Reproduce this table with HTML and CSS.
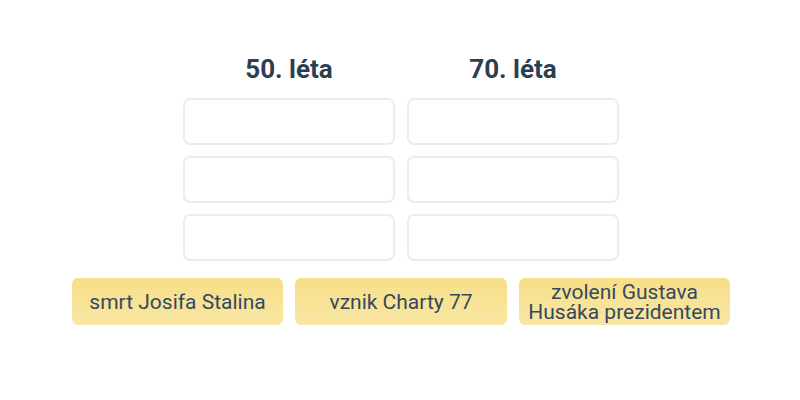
FILE: index.html
```html
<!DOCTYPE html>
<html lang="cs">
<head>
<meta charset="utf-8">
<link rel="stylesheet" href="styles.css">
</head>
<body>
<div class="page">
  <div class="board">
    <div class="col">
      <h2 class="title">50. léta</h2>
      <div class="slot"></div>
      <div class="slot"></div>
      <div class="slot"></div>
    </div>
    <div class="col">
      <h2 class="title">70. léta</h2>
      <div class="slot"></div>
      <div class="slot"></div>
      <div class="slot"></div>
    </div>
  </div>
  <div class="cards">
    <div class="card">smrt Josifa Stalina</div>
    <div class="card">vznik Charty 77</div>
    <div class="card">zvolení Gustava Husáka prezidentem</div>
  </div>
</div>
</body>
</html>
```
FILE: styles.css
```css
html, body {
  margin: 0;
  padding: 0;
  background: #ffffff;
}
body {
  font-family: Roboto, "Liberation Sans", sans-serif;
}
.page {
  width: 800px;
  padding-top: 53px;
  display: flex;
  flex-direction: column;
  align-items: center;
}
.board {
  display: flex;
  gap: 12px;
  margin-left: 2px;
}
.col {
  width: 212px;
  display: flex;
  flex-direction: column;
  gap: 11px;
}
.title {
  margin: 0 0 2px;
  font-size: 26px;
  line-height: 32px;
  font-weight: 700;
  color: #2c3e50;
  text-align: center;
}
.slot {
  height: 47px;
  box-sizing: border-box;
  border: 2px solid #e9edf0;
  border-radius: 7px;
  background: #fff;
}
.cards {
  display: flex;
  gap: 12px;
  margin-top: 17px;
  margin-left: 2px;
}
.card {
  width: 211.5px;
  height: 47px;
  box-sizing: border-box;
  border-radius: 6px;
  background: linear-gradient(#f7df88, #f9e6a4);
  color: #34495e;
  font-size: 21px;
  line-height: 20px;
  display: flex;
  align-items: center;
  justify-content: center;
  text-align: center;
  padding: 0 6px;
}
```
